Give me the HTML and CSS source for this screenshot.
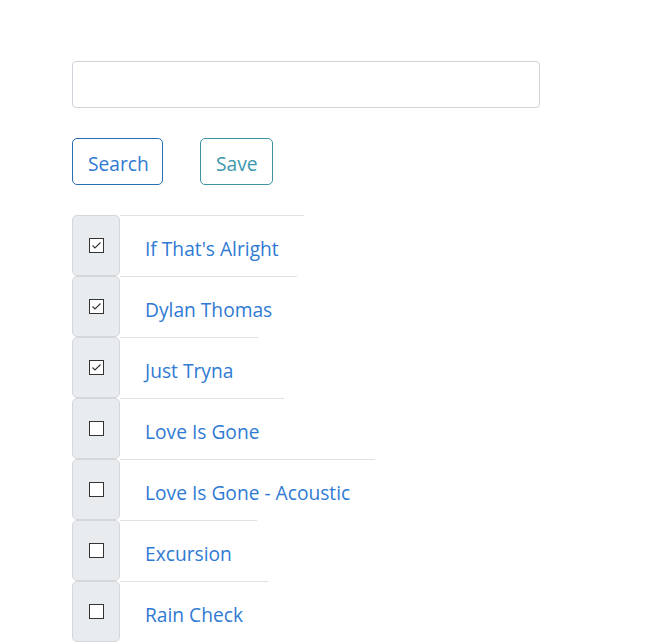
FILE: index.html
```html
<!DOCTYPE html>
<html>
<head>
<meta charset="utf-8">
<link rel="stylesheet" href="styles.css">
</head>
<body>
<div class="page">
  <input class="search-input" type="text">
  <div class="actions">
    <button class="btn btn-primary">Search</button>
    <button class="btn btn-info">Save</button>
  </div>
  <ul class="tracks">
    <li class="track"><span class="check-box"><svg class="cb" viewBox="0 0 15 15"><rect x="0.5" y="0.5" width="14" height="14" fill="#fff" stroke="#333"/><path d="M3.5 7.5 L6 10 L11.5 4.5" fill="none" stroke="#333" stroke-width="1.1"/></svg></span><a class="title">If That's Alright</a></li>
    <li class="track"><span class="check-box"><svg class="cb" viewBox="0 0 15 15"><rect x="0.5" y="0.5" width="14" height="14" fill="#fff" stroke="#333"/><path d="M3.5 7.5 L6 10 L11.5 4.5" fill="none" stroke="#333" stroke-width="1.1"/></svg></span><a class="title">Dylan Thomas</a></li>
    <li class="track"><span class="check-box"><svg class="cb" viewBox="0 0 15 15"><rect x="0.5" y="0.5" width="14" height="14" fill="#fff" stroke="#333"/><path d="M3.5 7.5 L6 10 L11.5 4.5" fill="none" stroke="#333" stroke-width="1.1"/></svg></span><a class="title">Just Tryna</a></li>
    <li class="track"><span class="check-box"><svg class="cb" viewBox="0 0 15 15"><rect x="0.5" y="0.5" width="14" height="14" fill="#fff" stroke="#333"/></svg></span><a class="title">Love Is Gone</a></li>
    <li class="track"><span class="check-box"><svg class="cb" viewBox="0 0 15 15"><rect x="0.5" y="0.5" width="14" height="14" fill="#fff" stroke="#333"/></svg></span><a class="title">Love Is Gone - Acoustic</a></li>
    <li class="track"><span class="check-box"><svg class="cb" viewBox="0 0 15 15"><rect x="0.5" y="0.5" width="14" height="14" fill="#fff" stroke="#333"/></svg></span><a class="title">Excursion</a></li>
    <li class="track"><span class="check-box"><svg class="cb" viewBox="0 0 15 15"><rect x="0.5" y="0.5" width="14" height="14" fill="#fff" stroke="#333"/></svg></span><a class="title">Rain Check</a></li>
  </ul>
</div>
</body>
</html>
```

FILE: styles.css
```css
html, body {
  margin: 0;
  padding: 0;
  background: #fff;
}
.page {
  padding: 61px 0 0 72px;
  font-family: "Open Sans", "Noto Sans", sans-serif;
  font-size: 19.2px;
}
.search-input {
  display: block;
  box-sizing: border-box;
  width: 468px;
  height: 47px;
  border: 1px solid #ced4da;
  border-radius: 4px;
  background: #fff;
  margin: 0;
  padding: 0 16px;
  font: inherit;
}
.actions {
  display: flex;
  gap: 37px;
  margin-top: 30px;
}
.btn {
  box-sizing: border-box;
  height: 47px;
  padding: 4px 15px 0 15px;
  background: #fff;
  border-radius: 5px;
  font: inherit;
  line-height: 1;
  cursor: pointer;
}
.btn-primary {
  width: 91px;
  border: 1px solid #2a6fb3;
  color: #2f7ad3;
}
.btn-info {
  width: 73px;
  border: 1px solid #3b94a6;
  color: #3a99ae;
}
.tracks {
  list-style: none;
  margin: 30px 0 0;
  padding: 0;
}
.track {
  display: flex;
  height: 61px;
}
.check-box {
  box-sizing: border-box;
  width: 48px;
  height: 61px;
  display: flex;
  align-items: center;
  justify-content: center;
  background: #e9ecef;
  border: 1px solid #d4d8dc;
  border-radius: 5px;
}
.cb {
  width: 15px;
  height: 15px;
  display: block;
}
.title {
  box-sizing: border-box;
  display: flex;
  align-items: center;
  padding: 4px 25px 0;
  border-top: 1px solid #dee2e6;
  color: #2f7ad3;
  white-space: nowrap;
}
```
